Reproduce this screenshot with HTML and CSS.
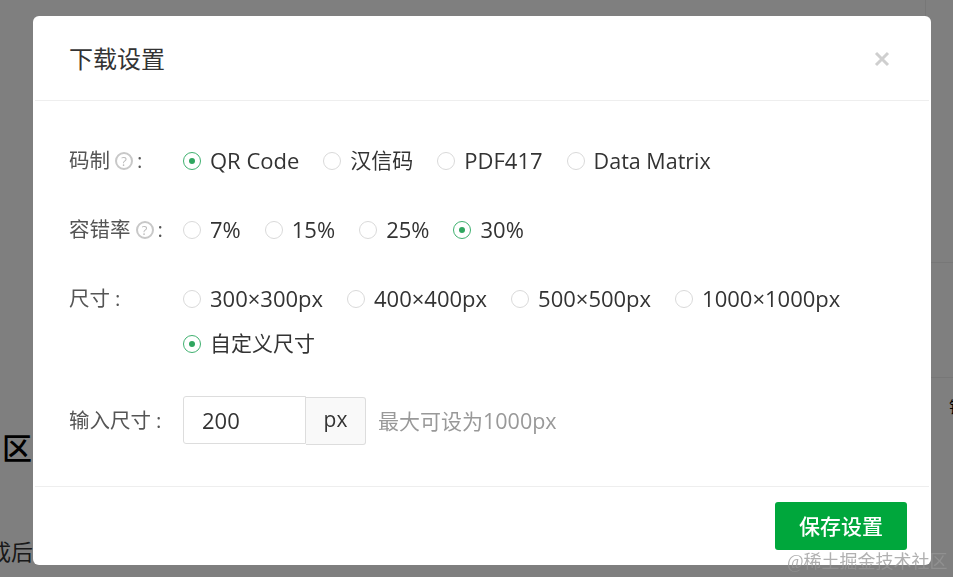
FILE: index.html
```html
<!DOCTYPE html>
<html lang="zh-CN">
<head>
    <meta charset="UTF-8">
    <meta name="viewport" content="width=device-width, initial-scale=1.0">
    <link rel="stylesheet" href="styles.css">
    <title>下载设置</title>
</head>
<body>
    <!-- page behind the dialog, only the edges show -->
    <div class="page">
        <div class="page-rule-v"></div>
        <div class="page-rule-a"></div>
        <div class="page-rule-b"></div>
        <div class="page-heading">区</div>
        <div class="page-text">成后</div>
        <div class="page-side">错</div>
    </div>

    <div class="mask">
        <div class="modal">
            <div class="modal-header">
                <h1>下载设置</h1>
                <span class="close">
                    <svg width="16" height="16" viewBox="0 0 16 16"><path d="M2 2 L14 14 M14 2 L2 14" stroke="#cfcfcf" stroke-width="3" fill="none"/></svg>
                </span>
            </div>
            <div class="modal-body">
                <div class="row">
                    <div class="label">码制<span class="help">?</span><span class="colon">:</span></div>
                    <div class="options">
                        <label class="radio on"><i></i>QR Code</label>
                        <label class="radio"><i></i><span class="cjk">汉信码</span></label>
                        <label class="radio"><i></i>PDF417</label>
                        <label class="radio"><i></i><span class="tight">Data Matrix</span></label>
                    </div>
                </div>
                <div class="row">
                    <div class="label">容错率<span class="help">?</span><span class="colon">:</span></div>
                    <div class="options">
                        <label class="radio"><i></i>7%</label>
                        <label class="radio"><i></i>15%</label>
                        <label class="radio"><i></i>25%</label>
                        <label class="radio on"><i></i>30%</label>
                    </div>
                </div>
                <div class="row">
                    <div class="label">尺寸<span class="colon plain">:</span></div>
                    <div class="options">
                        <label class="radio"><i></i>300×300px</label>
                        <label class="radio"><i></i>400×400px</label>
                        <label class="radio"><i></i>500×500px</label>
                        <label class="radio"><i></i>1000×1000px</label>
                        <label class="radio on"><i></i><span class="cjk">自定义尺寸</span></label>
                    </div>
                </div>
                <div class="row row-input">
                    <div class="label">输入尺寸<span class="colon plain">:</span></div>
                    <div class="input-group">
                        <input type="text" value="200">
                        <span class="addon">px</span>
                        <span class="hint"><span class="cjk">最大可设为</span>1000px</span>
                    </div>
                </div>
            </div>
            <div class="modal-footer">
                <button>保存设置</button>
            </div>
        </div>
    </div>
    <div class="watermark">@稀土掘金技术社区</div>
</body>
</html>
```

FILE: styles.css
```css
* {
    box-sizing: border-box;
}

html, body {
    height: 100%;
}

body {
    font-family: "Open Sans", "Noto Sans CJK SC", sans-serif;
    background-color: #fff;
    margin: 0;
    overflow: hidden;
    color: #333;
}

/* page behind the mask */
.page-rule-v {
    position: absolute;
    left: 925px;
    top: 0;
    width: 1px;
    height: 20px;
    background-color: #eee;
}

.page-rule-a,
.page-rule-b {
    position: absolute;
    left: 925px;
    width: 28px;
    height: 1px;
    background-color: #eee;
}

.page-rule-a {
    top: 262px;
}

.page-rule-b {
    top: 377px;
}

.page-heading {
    position: absolute;
    left: 2px;
    top: 427px;
    font-size: 30px;
    line-height: 42px;
    font-weight: 500;
    color: #000;
}

.page-text {
    position: absolute;
    left: -11px;
    top: 534px;
    font-size: 22px;
    line-height: 34px;
    color: #333;
}

.page-side {
    position: absolute;
    left: 949px;
    top: 397px;
    font-size: 16px;
    line-height: 20px;
    color: #000;
}

.mask {
    position: fixed;
    left: 0;
    top: 0;
    right: 0;
    bottom: 0;
    background-color: rgba(0, 0, 0, 0.5);
    padding: 16px 22px 12px 33px;
}

.modal {
    width: 898px;
    height: 549px;
    background-color: #fff;
    border-radius: 6px;
    display: flex;
    flex-direction: column;
}

.modal-header {
    height: 85px;
    margin: 0 2px;
    padding: 0 39px 2px 34px;
    border-bottom: 1px solid #eee;
    display: flex;
    justify-content: space-between;
    align-items: center;
}

h1 {
    margin: 0;
    font-size: 24px;
    font-weight: 400;
    color: #333;
}

.close {
    display: flex;
    margin-top: 4px;
}

.modal-body {
    flex: 1;
    padding: 37px 36px 0;
}

.row {
    display: flex;
    margin-bottom: 24px;
}

.row-input {
    margin-top: 29px;
    margin-bottom: 0;
    align-items: center;
}

.label {
    width: 114px;
    height: 45px;
    flex: none;
    font-size: 20.5px;
    line-height: 45px;
    color: #555;
    display: flex;
    align-items: center;
}

.help {
    width: 18px;
    height: 18px;
    margin: 0 4px 0 5px;
    border: 2px solid #c8c8c8;
    border-radius: 50%;
    font-size: 13px;
    line-height: 14px;
    text-align: center;
    color: #bbb;
}

.colon.plain {
    margin-left: 5px;
}

.options {
    display: flex;
    flex-wrap: wrap;
    column-gap: 24px;
}

.radio {
    display: flex;
    align-items: center;
    font-size: 22px;
    line-height: 45px;
    color: #333;
}

.cjk {
    font-size: 21px;
}

.tight {
    font-size: 21.5px;
}

.radio i {
    width: 18px;
    height: 18px;
    margin-right: 9px;
    border: 1px solid #d9d9d9;
    border-radius: 50%;
    display: flex;
    align-items: center;
    justify-content: center;
}

.radio.on i {
    border-color: #3fb06f;
}

.radio.on i::after {
    content: "";
    width: 6px;
    height: 6px;
    border-radius: 50%;
    background-color: #2fa65f;
}

.input-group {
    display: flex;
    align-items: center;
}

input {
    width: 123px;
    height: 48px;
    padding: 0 18px;
    border: 1px solid #ddd;
    border-radius: 3px 0 0 3px;
    font-family: inherit;
    font-size: 22px;
    color: #333;
    outline: none;
}

.addon {
    width: 60px;
    height: 48px;
    margin-top: 2px;
    border: 1px solid #ddd;
    border-left: none;
    border-radius: 0 3px 3px 0;
    background-color: #f9f9f9;
    font-size: 21px;
    line-height: 42px;
    text-align: center;
    color: #333;
}

.hint {
    margin-left: 12px;
    font-size: 21.5px;
    color: #999;
}

.modal-footer {
    height: 79px;
    margin: 0 2px;
    padding: 15px 22px 0;
    border-top: 1px solid #eee;
    display: flex;
    justify-content: flex-end;
    align-items: flex-start;
}

button {
    width: 132px;
    height: 48px;
    padding: 0 0 2px;
    background-color: #00a73c;
    color: #fff;
    border: none;
    border-radius: 3px;
    font-family: inherit;
    font-size: 21px;
    font-weight: 500;
    cursor: pointer;
}

.watermark {
    position: absolute;
    left: 787px;
    top: 549px;
    font-family: "Liberation Serif", "Noto Sans CJK SC", serif;
    font-size: 18px;
    line-height: 26px;
    color: rgba(150, 150, 150, 0.75);
}
```
